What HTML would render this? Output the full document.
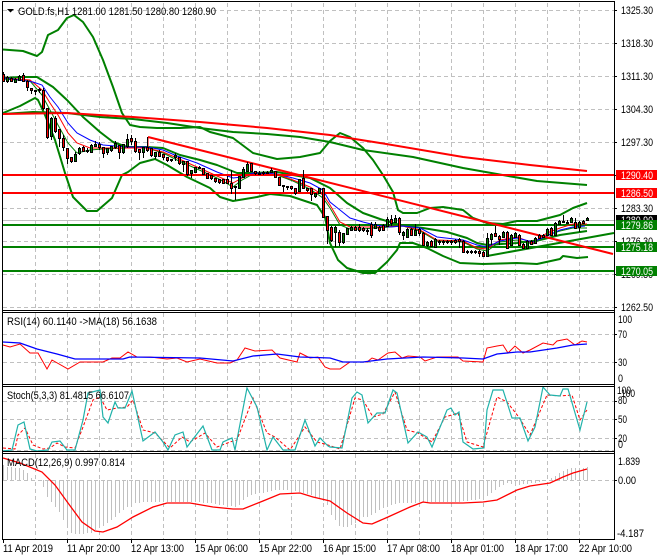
<!DOCTYPE html>
<html><head><meta charset="utf-8"><style>
html,body{margin:0;padding:0;background:#fff;width:660px;height:560px;overflow:hidden}
svg{display:block;font-family:"Liberation Sans",sans-serif;font-size:11px}
</style></head><body>
<svg width="660" height="560" viewBox="0 0 660 560" xmlns="http://www.w3.org/2000/svg">
<rect width="660" height="560" fill="#fff"/>
<!-- grid -->
<g stroke="#c0c0c0" fill="none" stroke-dasharray="4 3" shape-rendering="crispEdges">
<path d="M35.5 3V310M67.5 3V310M99.5 3V310M131.5 3V310M163.5 3V310M195.5 3V310M227.5 3V310M259.5 3V310M291.5 3V310M323.5 3V310M355.5 3V310M387.5 3V310M419.5 3V310M451.5 3V310M483.5 3V310M515.5 3V310M547.5 3V310M579.5 3V310"/>
<path d="M3 10.5H614M3 43.5H614M3 76.5H614M3 109.5H614M3 142.5H614M3 175.5H614M3 208.5H614M3 241.5H614M3 274.5H614M3 307.5H614"/>
<path d="M35.5 313V384M67.5 313V384M99.5 313V384M131.5 313V384M163.5 313V384M195.5 313V384M227.5 313V384M259.5 313V384M291.5 313V384M323.5 313V384M355.5 313V384M387.5 313V384M419.5 313V384M451.5 313V384M483.5 313V384M515.5 313V384M547.5 313V384M579.5 313V384"/>
<path d="M3 334.5H614M3 362.5H614"/>
<path d="M35.5 387V451M67.5 387V451M99.5 387V451M131.5 387V451M163.5 387V451M195.5 387V451M227.5 387V451M259.5 387V451M291.5 387V451M323.5 387V451M355.5 387V451M387.5 387V451M419.5 387V451M451.5 387V451M483.5 387V451M515.5 387V451M547.5 387V451M579.5 387V451"/>
<path d="M3 401.5H614M3 419.5H614M3 438.5H614M3 450.5H614"/>
<path d="M35.5 454V539M67.5 454V539M99.5 454V539M131.5 454V539M163.5 454V539M195.5 454V539M227.5 454V539M259.5 454V539M291.5 454V539M323.5 454V539M355.5 454V539M387.5 454V539M419.5 454V539M451.5 454V539M483.5 454V539M515.5 454V539M547.5 454V539M579.5 454V539"/>
<path d="M3 480.5H614"/>
</g>
<!-- price line -->
<path d="M3 220.5H614" stroke="#c0c0c0" fill="none" shape-rendering="crispEdges"/>
<!-- big BB, thick green -->
<g fill="none" stroke="#008000" stroke-width="2" stroke-linejoin="round">
<polyline points="3,49.5 23,51 37,56 42,52 48,35 58,30 67,18 74,15 83,22 93,37 103,60 113,87 122,113 130,125 140,127 157,128 180,128 200,127 210,132 233,138 253,153 277,159 300,157 320,153 330,141 340,133 350,137 363,148 373,160 383,175 393,192 398,210 403,213 417,213 430,208 443,207 463,210 473,218 487,223 503,224 517,221 537,221 560,215 573,208 587,203"/>
<polyline points="3,113 20,106 35,98 38,100 45,115 55,140 65,173 73,197 87,211 97,211 112,198 122,175 128,172 140,163 155,159 167,165 187,177 210,188 220,197 233,201 257,197 270,194 290,196 317,205 325,217 330,243 338,260 347,268 363,273 375,273 387,262 397,250 400,243 413,243 427,248 443,256 460,263 483,264 517,263 537,264 560,259 563,256 577,258 588,257"/>
<polyline points="3,78 20,77 37,77 53,87 67,100 83,117 100,132 113,142 127,147 147,147 163,148 180,155 200,160 217,165 237,173 253,173 277,172 293,175 310,178 330,188 347,203 363,213 380,219 400,225 423,228 447,232 467,238 477,243 487,245 517,243 540,240 560,235 587,231"/>
<polyline points="3,114 33,112 67,113 100,117 133,119 167,123 200,128 233,132 267,134 300,137 330,142 363,150 413,157 463,168 497,174 537,181 587,185"/>
<path d="M487 256L614 233"/>
<path d="M3 225H614M3 247H614M3 271H614" stroke-width="2" shape-rendering="crispEdges"/>
</g>
<!-- MAs -->
<g fill="none" stroke-width="1">
<polyline stroke="#008000" points="3,79 30,81 42,95 50,110 58,125 68,143 77,153 90,150 103,149 127,148 147,148 163,153 177,160 197,169 217,178 233,187 242,180 253,174 277,175 293,181 310,189 323,198 330,208 340,225 350,229 363,229 375,228 403,226 420,231 437,241 463,242 477,249 487,251 500,242 517,240 533,244 547,235 560,231 573,228 587,228"/>
<polyline stroke="#f00" points="3,78 30,80 42,90 50,103 58,115 68,133 77,143 90,148 103,148 127,148 147,148 163,152 177,158 197,167 217,176 233,183 242,178 253,173 277,174 293,180 310,187 323,195 330,205 340,222 350,227 363,227 375,227 403,226 420,230 437,240 463,241 477,248 487,249 500,240 517,237 533,243 547,233 560,228 573,224 587,224"/>
<polyline stroke="#00f" points="3,78 13,79 33,82 42,85 50,97 58,107 68,123 77,133 90,140 103,145 127,147 147,147 163,150 177,156 197,163 217,172 233,178 242,177 253,173 277,174 293,178 310,183 323,190 330,202 340,210 350,218 363,222 375,225 390,227 403,226 420,228 437,237 463,240 477,245 487,247 500,241 517,238 533,242 547,236 560,230 573,227 585,226"/>
</g>
<!-- red lines -->
<g fill="none" stroke="#f00" stroke-width="2">
<polyline points="3,114 67,113 133,117 200,122 267,128 330,135 380,143 463,157 530,165 587,171"/>
<path d="M148 137L613 254"/>
<path d="M148 137V147" stroke-width="1"/>
<path d="M3 175H614M3 193H614" stroke-width="2" shape-rendering="crispEdges"/>
</g>
<!-- candle wicks -->
<path fill="none" stroke="#000" shape-rendering="crispEdges" d="M3.5 72V82M7.5 76V83M11.5 77V82M15.5 78V83M19.5 75V81M23.5 73V82M27.5 80V91M31.5 88V94M35.5 90V95M39.5 88V93M43.5 88V110M47.5 108V139M51.5 117V140M55.5 116V133M59.5 129V147M63.5 135V151M67.5 148V164M71.5 157V163M75.5 152V162M79.5 147V155M83.5 146V152M87.5 148V153M91.5 144V153M95.5 141V147M99.5 142V150M103.5 147V158M107.5 148V155M111.5 146V152M115.5 141V149M119.5 145V159M123.5 144V154M127.5 134V148M131.5 135V145M135.5 138V153M139.5 149V160M143.5 147V158M147.5 137V152M151.5 148V157M155.5 152V159M159.5 150V157M163.5 154V160M167.5 157V162M171.5 159V162M175.5 153V161M179.5 157V165M183.5 161V172M187.5 161V176M191.5 170V178M195.5 167V173M199.5 166V169M203.5 168V175M207.5 173V179M211.5 175V180M215.5 178V183M219.5 179V184M223.5 179V184M227.5 176V184M231.5 170V194M235.5 186V200M239.5 176V189M243.5 167V178M247.5 162V172M251.5 163V172M255.5 171V175M259.5 171V175M263.5 171V175M267.5 171V174M271.5 168V173M275.5 171V178M279.5 177V186M283.5 185V192M287.5 186V190M291.5 186V190M295.5 188V195M299.5 179V192M303.5 170V189M307.5 188V192M311.5 188V201M315.5 193V198M319.5 188V194M323.5 188V218M327.5 216V244M331.5 226V242M335.5 226V247M339.5 230V246M343.5 233V244M347.5 228V235M351.5 226V231M355.5 226V231M359.5 224V232M363.5 227V232M367.5 228V235M371.5 222V238M375.5 222V229M379.5 226V232M383.5 224V231M387.5 217V227M391.5 215V226M395.5 215V223M399.5 217V235M403.5 231V240M407.5 228V238M411.5 228V236M415.5 224V236M419.5 228V236M423.5 232V246M427.5 241V247M431.5 240V247M435.5 238V248M439.5 240V245M443.5 240V245M447.5 240V244M451.5 240V245M455.5 239V244M459.5 238V248M463.5 240V253M467.5 250V254M471.5 250V254M475.5 250V254M479.5 250V257M483.5 251V257M487.5 233V257M491.5 233V245M495.5 226V237M499.5 235V245M503.5 231V238M507.5 231V249M511.5 234V246M515.5 232V238M519.5 234V246M523.5 243V249M527.5 240V249M531.5 240V245M535.5 237V244M539.5 234V239M543.5 234V238M547.5 228V236M551.5 227V236M555.5 222V236M559.5 220V225M563.5 215V223M567.5 220V224M571.5 217V223M575.5 218V229M579.5 221V232M583.5 220V224M587.5 217V221"/>
<!-- red bodies -->
<path fill="#f00" stroke="#000" shape-rendering="crispEdges" d="M2.5 74.5h2v7h-2zM10.5 78.5h2v3h-2zM22.5 75.5h2v6h-2zM26.5 81.5h2v6h-2zM30.5 88.5h2v2h-2zM34.5 90.5h2v1h-2zM38.5 89.5h2v1h-2zM42.5 90.5h2v18h-2zM46.5 108.5h2v29h-2zM54.5 118.5h2v13h-2zM58.5 129.5h2v9h-2zM62.5 138.5h2v9h-2zM66.5 148.5h2v10h-2zM70.5 157.5h2v4h-2zM82.5 147.5h2v4h-2zM86.5 150.5h2v1h-2zM98.5 144.5h2v3h-2zM102.5 147.5h2v6h-2zM118.5 145.5h2v7h-2zM130.5 138.5h2v3h-2zM134.5 141.5h2v10h-2zM138.5 149.5h2v3h-2zM146.5 147.5h2v3h-2zM150.5 148.5h2v7h-2zM158.5 152.5h2v4h-2zM162.5 154.5h2v3h-2zM166.5 157.5h2v3h-2zM178.5 157.5h2v6h-2zM186.5 161.5h2v13h-2zM198.5 167.5h2v1h-2zM202.5 168.5h2v6h-2zM206.5 173.5h2v5h-2zM210.5 175.5h2v3h-2zM214.5 178.5h2v3h-2zM218.5 179.5h2v3h-2zM222.5 179.5h2v4h-2zM226.5 179.5h2v4h-2zM230.5 183.5h2v5h-2zM234.5 186.5h2v1h-2zM250.5 163.5h2v8h-2zM254.5 171.5h2v2h-2zM258.5 173.5h2v1h-2zM262.5 172.5h2v1h-2zM266.5 172.5h2v1h-2zM274.5 171.5h2v6h-2zM278.5 177.5h2v8h-2zM282.5 185.5h2v1h-2zM286.5 186.5h2v1h-2zM290.5 186.5h2v2h-2zM294.5 188.5h2v5h-2zM302.5 178.5h2v10h-2zM306.5 188.5h2v2h-2zM310.5 188.5h2v6h-2zM322.5 188.5h2v29h-2zM326.5 216.5h2v14h-2zM330.5 227.5h2v13h-2zM338.5 232.5h2v10h-2zM354.5 227.5h2v3h-2zM358.5 227.5h2v3h-2zM362.5 228.5h2v2h-2zM366.5 230.5h2v1h-2zM370.5 224.5h2v11h-2zM378.5 227.5h2v3h-2zM382.5 225.5h2v5h-2zM390.5 219.5h2v4h-2zM398.5 218.5h2v14h-2zM410.5 229.5h2v6h-2zM418.5 229.5h2v4h-2zM422.5 233.5h2v12h-2zM430.5 241.5h2v5h-2zM438.5 241.5h2v1h-2zM442.5 241.5h2v1h-2zM446.5 241.5h2v1h-2zM450.5 241.5h2v1h-2zM454.5 240.5h2v2h-2zM458.5 239.5h2v2h-2zM462.5 241.5h2v11h-2zM466.5 251.5h2v1h-2zM470.5 251.5h2v1h-2zM474.5 251.5h2v1h-2zM478.5 251.5h2v2h-2zM482.5 252.5h2v4h-2zM494.5 233.5h2v3h-2zM498.5 236.5h2v3h-2zM506.5 232.5h2v16h-2zM518.5 235.5h2v10h-2zM522.5 244.5h2v4h-2zM530.5 241.5h2v3h-2zM538.5 235.5h2v3h-2zM542.5 235.5h2v2h-2zM550.5 228.5h2v7h-2zM562.5 221.5h2v1h-2zM566.5 222.5h2v1h-2zM574.5 222.5h2v6h-2zM582.5 221.5h2v2h-2z"/>
<!-- green bodies -->
<path fill="#008000" stroke="#000" shape-rendering="crispEdges" d="M6.5 77.5h2v4h-2zM14.5 79.5h2v3h-2zM18.5 76.5h2v4h-2zM50.5 118.5h2v18h-2zM74.5 154.5h2v7h-2zM78.5 148.5h2v5h-2zM90.5 145.5h2v7h-2zM94.5 144.5h2v2h-2zM106.5 148.5h2v4h-2zM110.5 146.5h2v4h-2zM114.5 143.5h2v4h-2zM122.5 144.5h2v8h-2zM126.5 139.5h2v7h-2zM142.5 147.5h2v5h-2zM154.5 152.5h2v4h-2zM170.5 159.5h2v1h-2zM174.5 155.5h2v2h-2zM182.5 161.5h2v3h-2zM190.5 170.5h2v3h-2zM194.5 167.5h2v5h-2zM238.5 176.5h2v12h-2zM242.5 169.5h2v8h-2zM246.5 164.5h2v7h-2zM270.5 170.5h2v2h-2zM298.5 179.5h2v12h-2zM314.5 193.5h2v3h-2zM318.5 188.5h2v5h-2zM334.5 227.5h2v5h-2zM342.5 233.5h2v9h-2zM346.5 228.5h2v6h-2zM350.5 227.5h2v3h-2zM374.5 224.5h2v4h-2zM386.5 219.5h2v7h-2zM394.5 218.5h2v4h-2zM402.5 232.5h2v3h-2zM406.5 229.5h2v8h-2zM414.5 230.5h2v5h-2zM426.5 242.5h2v3h-2zM434.5 239.5h2v8h-2zM486.5 238.5h2v18h-2zM490.5 234.5h2v5h-2zM502.5 232.5h2v5h-2zM510.5 235.5h2v10h-2zM514.5 233.5h2v4h-2zM526.5 241.5h2v7h-2zM534.5 238.5h2v5h-2zM546.5 229.5h2v6h-2zM554.5 223.5h2v12h-2zM558.5 221.5h2v3h-2zM570.5 218.5h2v4h-2zM578.5 222.5h2v5h-2zM586.5 218.5h2v2h-2z"/>
<!-- RSI -->
<polyline fill="none" stroke="#f00" points="3,345 10,347 20,344 30,353 38,353 47,369 52,360 68,369 80,362 90,362 103,362 112,358 120,358 128,352 137,357 150,357 167,359 177,358 187,362 200,359 217,363 230,363 237,360 245,348 255,351 272,350 280,358 297,362 300,353 310,358 318,357 325,367 330,369 340,369 350,362 367,362 372,358 378,360 388,353 395,352 402,358 408,356 420,357 425,361 437,357 458,357 463,361 483,362 487,348 497,346 503,345 508,353 515,346 523,353 530,350 543,343 553,345 557,341 567,339 575,345 582,341 587,342"/>
<polyline fill="none" stroke="#00f" stroke-width="1.3" points="3,342 20,343 37,349 57,354 75,359 100,359 123,359 130,357 200,358 233,361 253,356 277,354 300,357 330,358 343,362 363,362 387,359 423,357 463,358 483,359 497,354 517,352 530,352 557,348 573,345 587,344"/>
<!-- Stoch -->
<polyline fill="none" stroke="#f00" stroke-dasharray="3 2" points="3,448 15,449 18,435 25,428 33,445 43,449 50,448 57,443 65,447 75,448 83,427 93,400 100,397 107,410 117,408 127,407 133,400 143,430 155,433 170,448 182,437 190,442 205,433 217,447 230,442 237,440 253,398 267,433 275,437 290,450 305,427 317,442 328,445 340,449 355,398 363,400 373,417 383,414 395,392 407,430 418,433 432,442 445,417 458,413 467,442 483,447 497,397 507,402 518,416 530,435 547,395 560,396 572,395 580,420 587,410"/>
<polyline fill="none" stroke="#20b2aa" stroke-width="1.2" points="3,451 12,450 18,425 24,422 30,449 37,451 48,450 52,442 60,441 67,450 75,450 83,420 88,393 100,390 103,417 108,423 115,402 118,408 125,408 132,391 143,441 155,432 163,442 168,450 175,435 183,432 187,447 203,426 212,450 220,450 223,442 232,438 235,450 247,388 257,407 267,450 273,437 283,450 295,450 305,420 315,446 320,438 328,446 330,447 342,448 352,398 357,392 362,395 368,423 377,413 385,413 393,390 397,393 408,443 418,432 427,437 432,447 447,410 451,408 455,415 459,412 463,442 473,449 484,448 487,410 493,390 503,390 512,418 520,418 528,441 535,427 543,387 550,395 560,396 563,389 568,389 580,430 587,402"/>
<!-- MACD -->
<path fill="none" stroke="#c0c0c0" shape-rendering="crispEdges" d="M3.5 480V465M7.5 480V467M11.5 480V467M15.5 480V468M19.5 480V468M23.5 480V470M27.5 480V473M31.5 480V478M43.5 480V487M47.5 480V497M51.5 480V502M55.5 480V507M59.5 480V512M63.5 480V520M67.5 480V527M71.5 480V533M75.5 480V534M79.5 480V534M83.5 480V534M87.5 480V533M91.5 480V533M95.5 480V530M99.5 480V528M103.5 480V526M107.5 480V523M111.5 480V520M115.5 480V517M119.5 480V513M123.5 480V510M127.5 480V507M131.5 480V505M135.5 480V503M139.5 480V503M143.5 480V502M147.5 480V502M151.5 480V502M155.5 480V502M159.5 480V502M163.5 480V502M167.5 480V502M171.5 480V502M175.5 480V502M179.5 480V502M183.5 480V502M187.5 480V502M191.5 480V502M195.5 480V502M199.5 480V502M203.5 480V503M207.5 480V503M211.5 480V503M215.5 480V504M219.5 480V505M223.5 480V505M227.5 480V506M231.5 480V506M235.5 480V507M239.5 480V505M243.5 480V500M247.5 480V497M251.5 480V495M255.5 480V494M259.5 480V493M263.5 480V493M267.5 480V492M271.5 480V491M275.5 480V490M279.5 480V490M283.5 480V490M287.5 480V490M291.5 480V490M295.5 480V491M299.5 480V492M303.5 480V493M307.5 480V494M311.5 480V495M315.5 480V497M319.5 480V499M323.5 480V501M327.5 480V505M331.5 480V515M335.5 480V520M339.5 480V526M343.5 480V527M347.5 480V527M351.5 480V525M355.5 480V523M359.5 480V522M363.5 480V517M367.5 480V517M371.5 480V515M375.5 480V513M379.5 480V510M383.5 480V508M387.5 480V507M391.5 480V505M395.5 480V504M399.5 480V503M403.5 480V503M407.5 480V503M411.5 480V503M415.5 480V503M419.5 480V502M423.5 480V502M427.5 480V502M431.5 480V502M435.5 480V502M439.5 480V502M443.5 480V502M447.5 480V502M451.5 480V502M455.5 480V502M459.5 480V502M463.5 480V501M467.5 480V501M471.5 480V500M475.5 480V500M479.5 480V499M483.5 480V498M487.5 480V496M491.5 480V493M495.5 480V490M499.5 480V487M503.5 480V485M507.5 480V483M511.5 480V484M515.5 480V485M519.5 480V485M523.5 480V484M527.5 480V484M531.5 480V483M535.5 480V483M539.5 480V482M543.5 480V481M551.5 480V478M555.5 480V476M559.5 480V473M563.5 480V471M567.5 480V469M571.5 480V468M575.5 480V468M579.5 480V468M583.5 480V468M587.5 480V467"/>
<polyline fill="none" stroke="#f00" stroke-width="1.3" points="3,458 20,463 42,472 55,485 68,503 82,522 95,531 103,532 117,527 133,517 153,507 167,503 190,503 213,507 233,509 243,509 263,501 280,494 300,493 313,497 330,501 347,513 363,523 372,524 388,517 410,507 423,502 430,503 463,503 483,502 497,500 517,490 530,486 550,483 563,477 573,473 587,469"/>
<!-- frames -->
<g fill="none" stroke="#000" shape-rendering="crispEdges">
<path d="M2.5 1.5H614.5V539.5H2.5Z"/>
<path d="M2 310.5H614M2 312.5H614M2 384.5H614M2 386.5H614M2 451.5H614M2 453.5H614"/>
<path d="M3.5 539V543M67.5 539V543M131.5 539V543M195.5 539V543M259.5 539V543M323.5 539V543M387.5 539V543M451.5 539V543M515.5 539V543M579.5 539V543"/>
<path d="M614 10.5h3M614 43.5h3M614 76.5h3M614 109.5h3M614 142.5h3M614 175.5h3M614 208.5h3M614 241.5h3M614 274.5h3M614 307.5h3M614 334.5h3M614 362.5h3M614 401.5h3M614 419.5h3M614 438.5h3M614 480.5h3"/>
</g>
<!-- title -->
<path d="M7 9h7l-3.5 3.5z" fill="#000"/>
<text x="18" y="15" textLength="198" lengthAdjust="spacingAndGlyphs" fill="#000">GOLD.fs,H1  1281.00 1281.50 1280.80 1280.90</text>
<text x="7" y="325" textLength="150" lengthAdjust="spacingAndGlyphs">RSI(14) 60.1140  -&gt;MA(18) 56.1638</text>
<text x="7" y="399" textLength="122" lengthAdjust="spacingAndGlyphs">Stoch(5,3,3) 81.4815 66.6107</text>
<text x="7" y="466" textLength="118" lengthAdjust="spacingAndGlyphs">MACD(12,26,9) 0.997 0.814</text>
<!-- price axis -->
<g fill="#000">
<text x="621" y="14" textLength="32" lengthAdjust="spacingAndGlyphs">1325.30</text>
<text x="621" y="47" textLength="32" lengthAdjust="spacingAndGlyphs">1318.30</text>
<text x="621" y="80" textLength="32" lengthAdjust="spacingAndGlyphs">1311.30</text>
<text x="621" y="113" textLength="32" lengthAdjust="spacingAndGlyphs">1304.30</text>
<text x="621" y="146" textLength="32" lengthAdjust="spacingAndGlyphs">1297.30</text>
<text x="621" y="212" textLength="32" lengthAdjust="spacingAndGlyphs">1283.30</text>
<text x="621" y="245" textLength="32" lengthAdjust="spacingAndGlyphs">1276.30</text>
<text x="621" y="278" textLength="32" lengthAdjust="spacingAndGlyphs">1269.30</text>
<text x="621" y="311" textLength="32" lengthAdjust="spacingAndGlyphs">1262.50</text>
</g>
<rect x="616" y="215" width="41" height="10" fill="#000"/>
<text x="621" y="224" textLength="32" lengthAdjust="spacingAndGlyphs" fill="#fff">1280.90</text>
<rect x="616" y="170" width="41" height="10" fill="#f00"/>
<text x="621" y="179" textLength="32" lengthAdjust="spacingAndGlyphs" fill="#fff">1290.40</text>
<rect x="616" y="188" width="41" height="10" fill="#f00"/>
<text x="621" y="197" textLength="32" lengthAdjust="spacingAndGlyphs" fill="#fff">1286.50</text>
<rect x="616" y="220" width="41" height="10" fill="#008000"/>
<text x="621" y="229" textLength="32" lengthAdjust="spacingAndGlyphs" fill="#fff">1279.86</text>
<rect x="616" y="242" width="41" height="10" fill="#008000"/>
<text x="621" y="251" textLength="32" lengthAdjust="spacingAndGlyphs" fill="#fff">1275.18</text>
<rect x="616" y="266" width="41" height="10" fill="#008000"/>
<text x="621" y="275" textLength="32" lengthAdjust="spacingAndGlyphs" fill="#fff">1270.05</text>
<!-- indicator axes -->
<g fill="#000">
<text x="618" y="323" textLength="14" lengthAdjust="spacingAndGlyphs">100</text>
<text x="618" y="338" textLength="9" lengthAdjust="spacingAndGlyphs">70</text>
<text x="618" y="366" textLength="9" lengthAdjust="spacingAndGlyphs">30</text>
<text x="618" y="382" textLength="5" lengthAdjust="spacingAndGlyphs">0</text>
<text x="617" y="394" textLength="14" lengthAdjust="spacingAndGlyphs">100</text>
<text x="621" y="397" textLength="14" lengthAdjust="spacingAndGlyphs">100</text>
<text x="618" y="404" textLength="9" lengthAdjust="spacingAndGlyphs">80</text>
<text x="618" y="423" textLength="9" lengthAdjust="spacingAndGlyphs">50</text>
<text x="618" y="442" textLength="9" lengthAdjust="spacingAndGlyphs">20</text>
<text x="618" y="448" textLength="5" lengthAdjust="spacingAndGlyphs">0</text>
<text x="618" y="465" textLength="22" lengthAdjust="spacingAndGlyphs">1.839</text>
<text x="618" y="484" textLength="18" lengthAdjust="spacingAndGlyphs">0.00</text>
<text x="617" y="537" textLength="27" lengthAdjust="spacingAndGlyphs">-4.187</text>
</g>
<!-- time axis -->
<g fill="#000">
<text x="3" y="552" textLength="50" lengthAdjust="spacingAndGlyphs">11 Apr 2019</text>
<text x="67" y="552" textLength="53" lengthAdjust="spacingAndGlyphs">11 Apr 20:00</text>
<text x="131" y="552" textLength="53" lengthAdjust="spacingAndGlyphs">12 Apr 13:00</text>
<text x="195" y="552" textLength="53" lengthAdjust="spacingAndGlyphs">15 Apr 06:00</text>
<text x="259" y="552" textLength="53" lengthAdjust="spacingAndGlyphs">15 Apr 22:00</text>
<text x="323" y="552" textLength="53" lengthAdjust="spacingAndGlyphs">16 Apr 15:00</text>
<text x="387" y="552" textLength="53" lengthAdjust="spacingAndGlyphs">17 Apr 08:00</text>
<text x="451" y="552" textLength="53" lengthAdjust="spacingAndGlyphs">18 Apr 01:00</text>
<text x="515" y="552" textLength="53" lengthAdjust="spacingAndGlyphs">18 Apr 17:00</text>
<text x="579" y="552" textLength="53" lengthAdjust="spacingAndGlyphs">22 Apr 10:00</text>
</g>
</svg>
</body></html>
